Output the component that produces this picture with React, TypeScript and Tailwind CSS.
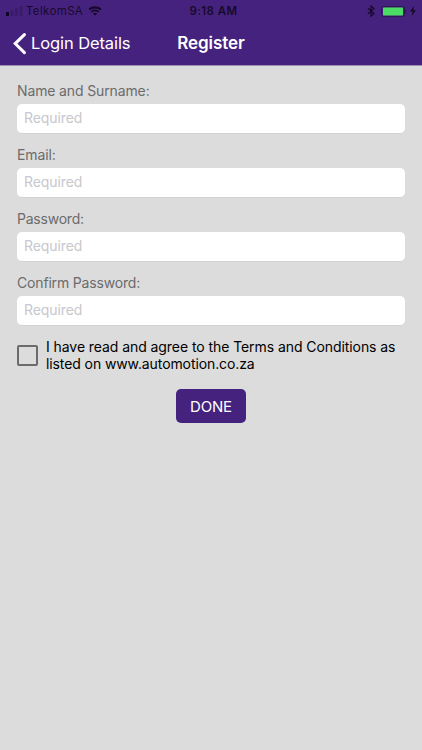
import React from "react";

const fields = [
  { id: "name", label: "Name and Surname:", type: "text", tracking: "tracking-[-0.13px]" },
  { id: "email", label: "Email:", type: "email", tracking: "tracking-[-0.1px]" },
  { id: "password", label: "Password:", type: "password", tracking: "tracking-[-0.22px]" },
  { id: "confirm", label: "Confirm Password:", type: "password", tracking: "tracking-[-0.17px]" },
];

function StatusBar() {
  return (
    <div className="grid grid-cols-3 items-center h-[22px] text-[#160a2b]">
      {/* Carrier and signal */}
      <div className="flex items-center pl-[6px]">
        <svg className="w-[17px] h-[11px]" viewBox="0 0 17 11">
          <rect x="0" y="6" width="3" height="4" rx="0.7" fill="#10051f" />
          <rect x="4.5" y="4.5" width="3" height="5.5" rx="0.7" fill="#391c69" />
          <rect x="9" y="2.5" width="3" height="7.5" rx="0.7" fill="#391c69" />
          <rect x="13.5" y="0.5" width="3" height="9.5" rx="0.7" fill="#391c69" />
        </svg>
        <span className="ml-[3px] pt-[2px] text-[11.5px] leading-none tracking-[0.35px]">TelkomSA</span>
        <svg className="ml-[5px] w-[14px] h-[10px]" viewBox="0 0 14 10" fill="none">
          <path d="M1.2 3.4C4.4 0.6 9.6 0.6 12.8 3.4" stroke="currentColor" strokeWidth="2.2" />
          <path d="M3.2 5.9C5.4 4 8.6 4 10.8 5.9" stroke="currentColor" strokeWidth="1.9" />
          <path d="M7 9.7L4.9 7.5C6.1 6.4 7.9 6.4 9.1 7.5Z" fill="currentColor" />
        </svg>
      </div>

      <p className="text-center text-[11.5px] leading-none font-semibold tracking-[0.4px] pl-[5px] pt-[2px]">9:18 AM</p>

      {/* Bluetooth and battery */}
      <div className="flex items-center justify-end pr-[6px]">
        <svg className="w-[8px] h-[12px]" viewBox="0 0 8 12" fill="none">
          <path d="M1 3.2L7 8.6L4 11.2V0.8L7 3.4L1 8.8" stroke="currentColor" strokeWidth="1.2" />
        </svg>
        <svg className="ml-[6px] w-[26px] h-[11px]" viewBox="0 0 26 11">
          <rect x="0.6" y="0.6" width="22.8" height="9.8" rx="1.8" fill="none" stroke="#2c154f" strokeWidth="1" />
          <rect x="2" y="1.6" width="20" height="7.8" rx="0.6" fill="#4cdb64" />
          <path d="M24.3 3.8C25.9 4.2 25.9 6.8 24.3 7.2Z" fill="#2c154f" />
        </svg>
        <svg className="ml-[3px] w-[6px] h-[10px]" viewBox="0 0 6 10">
          <path d="M4 0L0 5.6H2.6L1.8 10L6 4.2H3.4Z" fill="currentColor" />
        </svg>
      </div>
    </div>
  );
}

function NavBar() {
  return (
    <div className="grid grid-cols-3 items-center h-[43px] text-white">
      <button className="flex items-center pl-[13px] whitespace-nowrap">
        <svg className="w-[13px] h-[22px]" viewBox="0 0 13 22" fill="none">
          <path d="M11.4 1.6L2.2 10.6L11.4 19.6" stroke="currentColor" strokeWidth="3" strokeLinecap="round" />
        </svg>
        <span className="ml-[5px] text-[16.5px] leading-none tracking-[-0.1px]">Login Details</span>
      </button>
      <h1 className="text-center text-[17px] leading-none font-semibold tracking-[-0.05px]">Register</h1>
    </div>
  );
}

export default function App() {
  return (
    <div className="flex flex-col w-full h-screen overflow-hidden bg-[#dcdcdc] font-['Inter','Liberation_Sans',sans-serif]">
      <header className="h-[66px] shrink-0 bg-[#46227f] border-b border-[#9c8db5]">
        <StatusBar />
        <NavBar />
      </header>

      <main className="flex flex-col px-[17px] pt-[15px]">
        {fields.map((field) => (
          <div key={field.id} className="h-[64px]">
            <label
              htmlFor={field.id}
              className={`block h-[23px] leading-[20px] text-[14px] text-[#6b6b6b] ${field.tracking}`}
            >
              {field.label}
            </label>
            <input
              id={field.id}
              type={field.type}
              placeholder="Required"
              className="block w-full h-[30px] px-[7px] pb-[2px] rounded-[5px] bg-white border-b border-[#d2d2d2] text-[14px] tracking-[-0.1px] placeholder:text-[#c7c7cd] outline-none"
            />
          </div>
        ))}

        {/* Terms and conditions */}
        <div className="flex items-start mt-[1px]">
          <span
            role="checkbox"
            aria-checked="false"
            className="shrink-0 mt-[7px] w-[21px] h-[21px] border-2 border-[#6b6b6b] rounded-[2px]"
          />
          <p className="ml-[8px] text-[14px] leading-[17px] tracking-[-0.07px] text-black whitespace-nowrap">
            I have read and agree to the Terms and Conditions as
            <br />
            <span className="tracking-[-0.1px]">listed on www.automotion.co.za</span>
          </p>
        </div>

        <button className="self-center mt-[17px] w-[70px] h-[34px] pt-[2px] rounded-[5px] bg-[#46227f] text-white text-[15px] tracking-[-0.2px]">
          DONE
        </button>
      </main>
    </div>
  );
}
